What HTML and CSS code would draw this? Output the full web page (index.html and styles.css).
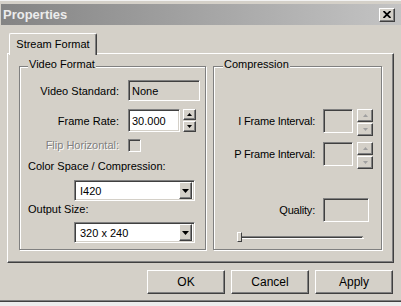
FILE: index.html
```html
<!DOCTYPE html>
<html>
<head>
<meta charset="utf-8">
<link rel="stylesheet" href="styles.css">
</head>
<body>
<div class="window">
  <div class="titlebar">
    <span class="title">Properties</span>
    <span class="close"><svg width="8" height="7" viewBox="0 0 8 7"><path d="M0.5 0 L7.5 7 M7.5 0 L0.5 7" stroke="#000" stroke-width="1.8" fill="none"/></svg></span>
  </div>
  <div class="main">
    <div class="tabs"><div class="tab">Stream Format</div></div>
    <div class="panel">
      <div class="group video">
        <span class="legend">Video Format</span>
        <div class="row r1"><span class="lbl">Video Standard:</span><div class="field ro std">None</div></div>
        <div class="row r2"><span class="lbl">Frame Rate:</span><div class="field edit rate">30.000</div>
          <div class="spin small">
            <span class="sbtn"><svg width="5" height="3" viewBox="0 0 5 3"><path d="M2.5 0 L5 3 L0 3 Z" fill="#000"/></svg></span>
            <span class="sbtn"><svg width="5" height="3" viewBox="0 0 5 3"><path d="M0 0 L5 0 L2.5 3 Z" fill="#000"/></svg></span>
          </div>
        </div>
        <div class="row r3"><span class="lbl dis">Flip Horizontal:</span><span class="check"></span></div>
        <div class="cap c1">Color Space / Compression:</div>
        <div class="combo"><span class="ctext">I420</span><span class="drop"><svg width="7" height="4" viewBox="0 0 7 4"><path d="M0 0 L7 0 L3.5 4 Z" fill="#000"/></svg></span></div>
        <div class="cap c2">Output Size:</div>
        <div class="combo"><span class="ctext">320 x 240</span><span class="drop"><svg width="7" height="4" viewBox="0 0 7 4"><path d="M0 0 L7 0 L3.5 4 Z" fill="#000"/></svg></span></div>
      </div>
      <div class="group comp">
        <span class="legend">Compression</span>
        <div class="crow i"><span class="clbl">I Frame Interval:</span><div class="field ro ibox"></div>
          <div class="spin big">
            <span class="sbtn"><svg width="5" height="3" viewBox="0 0 5 3"><path d="M2.5 0 L5 3 L0 3 Z" fill="#a0a0a0"/></svg></span>
            <span class="sbtn"><svg width="5" height="3" viewBox="0 0 5 3"><path d="M0 0 L5 0 L2.5 3 Z" fill="#a0a0a0"/></svg></span>
          </div>
        </div>
        <div class="crow p"><span class="clbl">P Frame Interval:</span><div class="field ro ibox"></div>
          <div class="spin big">
            <span class="sbtn"><svg width="5" height="3" viewBox="0 0 5 3"><path d="M2.5 0 L5 3 L0 3 Z" fill="#a0a0a0"/></svg></span>
            <span class="sbtn"><svg width="5" height="3" viewBox="0 0 5 3"><path d="M0 0 L5 0 L2.5 3 Z" fill="#a0a0a0"/></svg></span>
          </div>
        </div>
        <div class="crow q"><span class="clbl">Quality:</span><div class="field ro qbox"></div></div>
        <div class="slider"><span class="thumb"></span></div>
      </div>
    </div>
    <div class="buttons">
      <div class="btn">OK</div>
      <div class="btn">Cancel</div>
      <div class="btn">Apply</div>
    </div>
  </div>
</div>
</body>
</html>
```
FILE: styles.css
```css
* { box-sizing: border-box; }
html, body { margin: 0; padding: 0; }
body {
  width: 401px;
  height: 306px;
  overflow: hidden;
  background: #ececec;
  font: 11px "Liberation Sans", Arial, sans-serif;
  color: #000;
}
.window {
  width: 401px;
  height: 302px;
  background: #d4d0c8;
  padding-top: 4px;
  border-bottom: 1px solid #404040;
  box-shadow: inset 0 -1px 0 #808080, inset 0 1px 0 #f2f2f2;
  display: flex;
  flex-direction: column;
}
.titlebar {
  margin-left: 1px;
  height: 21px;
  background: linear-gradient(to right, #848484, #c4c4c4);
  display: flex;
  align-items: center;
  justify-content: space-between;
  padding: 0 6px 0 2px;
}
.title {
  color: #ececec;
  font-weight: bold;
  font-size: 13px;
}
.close {
  width: 16px;
  height: 14px;
  background: #d4d0c8;
  border: 1px solid;
  border-color: #fff #404040 #404040 #fff;
  box-shadow: inset -1px -1px 0 #808080;
  display: flex;
  align-items: center;
  justify-content: center;
}
.main {
  flex: 1;
  padding: 8px 7px 0 7px;
  display: flex;
  flex-direction: column;
}
.tabs {
  height: 21px;
  display: flex;
  position: relative;
  z-index: 1;
  margin-bottom: -1px;
}
.tab {
  margin-left: 2px;
  width: 88px;
  height: 22px;
  background: #d4d0c8;
  border: 1px solid;
  border-bottom: none;
  border-color: #fff #404040 #fff #fff;
  border-radius: 2px 2px 0 0;
  box-shadow: inset -1px 0 0 #808080;
  display: flex;
  align-items: center;
  justify-content: center;
  padding-bottom: 1px;
}
.panel {
  width: 387px;
  height: 210px;
  border: 1px solid;
  border-color: #fff #404040 #404040 #fff;
  box-shadow: inset -1px -1px 0 #808080;
  display: flex;
  gap: 7px;
  padding: 12px 0 0 11px;
}
.group {
  position: relative;
  height: 184px;
  border: 1px solid #808080;
  box-shadow: 1px 1px 0 #fff, inset 1px 1px 0 #fff;
  display: flex;
  flex-direction: column;
}
.video { width: 187px; padding-top: 13px; }
.comp { width: 169px; padding-top: 42px; }
.legend {
  position: absolute;
  top: -9px;
  left: 8px;
  line-height: 13px;
  padding: 0 1px;
  background: #d4d0c8;
}
.comp .legend { left: 9px; }
.row {
  display: flex;
  align-items: center;
}
.lbl {
  width: 99px;
  margin-right: 9px;
  text-align: right;
}
.lbl.dis {
  color: #808080;
  text-shadow: 1px 1px 0 #fff;
}
.field {
  border: 1px solid;
  border-color: #808080 #fff #fff #808080;
  box-shadow: inset 1px 1px 0 #404040, inset -1px -1px 0 #d4d0c8;
  padding-left: 3px;
  display: flex;
  align-items: center;
}
.field.ro { background: #d4d0c8; }
.field.edit { background: #fff; }
.r1 { height: 21px; }
.std { width: 72px; height: 21px; }
.r2 { height: 23px; margin-top: 8px; }
.rate { width: 52px; height: 23px; }
.spin {
  display: flex;
  flex-direction: column;
  justify-content: space-between;
}
.spin.small { width: 13px; height: 23px; margin-left: 3px; }
.spin.big { width: 16px; height: 27px; margin-left: 4px; }
.sbtn {
  background: #d4d0c8;
  border: 1px solid;
  border-color: #fff #404040 #404040 #fff;
  box-shadow: inset -1px -1px 0 #808080;
  display: flex;
  align-items: center;
  justify-content: center;
}
.spin.small .sbtn { height: 11px; }
.spin.big .sbtn { height: 13px; }
.r3 { height: 14px; margin-top: 6px; }
.check {
  width: 13px;
  height: 13px;
  border: 1px solid;
  border-color: #808080 #fff #fff #808080;
  box-shadow: inset 1px 1px 0 #404040, inset -1px -1px 0 #d4d0c8;
  background: #d4d0c8;
}
.cap {
  line-height: 13px;
  padding-left: 8px;
}
.c1 { margin-top: 8px; }
.c2 { margin-top: 2px; }
.combo {
  margin-top: 7px;
  margin-left: 54px;
  width: 121px;
  height: 21px;
  background: #fff;
  border: 1px solid;
  border-color: #808080 #fff #fff #808080;
  box-shadow: inset 1px 1px 0 #404040, inset -1px -1px 0 #d4d0c8;
  display: flex;
  align-items: center;
  padding: 2px 2px 2px 5px;
}
.c2 + .combo { margin-top: 6px; }
.ctext { flex: 1; }
.drop {
  width: 13px;
  height: 17px;
  background: #d4d0c8;
  border: 1px solid;
  border-color: #fff #404040 #404040 #fff;
  box-shadow: inset -1px -1px 0 #808080;
  display: flex;
  align-items: center;
  justify-content: center;
}
.crow {
  display: flex;
  align-items: flex-start;
}
.clbl {
  width: 101px;
  margin-right: 8px;
  text-align: right;
  line-height: 24px;
  letter-spacing: -0.2px;
}
.ibox { width: 30px; height: 24px; }
.crow.p { margin-top: 6px; }
.crow.q { margin-top: 29px; }
.qbox { width: 46px; height: 24px; }
.slider {
  margin-top: 10px;
  margin-left: 23px;
  width: 127px;
  height: 10px;
  display: flex;
  background:
    linear-gradient(#808080, #808080) no-repeat 1px 4px / 125px 1px,
    linear-gradient(#404040, #404040) no-repeat 1px 5px / 124px 1px,
    linear-gradient(#fff, #fff) no-repeat 1px 6px / 126px 1px;
}
.thumb {
  width: 5px;
  height: 10px;
  background: #d4d0c8;
  border: 1px solid;
  border-color: #fff #404040 #404040 #fff;
}
.buttons {
  margin-top: 7px;
  display: flex;
  justify-content: flex-end;
  gap: 6px;
  padding-right: 1px;
}
.btn {
  width: 78px;
  height: 24px;
  background: #d4d0c8;
  border: 1px solid;
  border-color: #fff #404040 #404040 #fff;
  box-shadow: inset -1px -1px 0 #808080;
  display: flex;
  align-items: center;
  justify-content: center;
  font-size: 12px;
}
```
